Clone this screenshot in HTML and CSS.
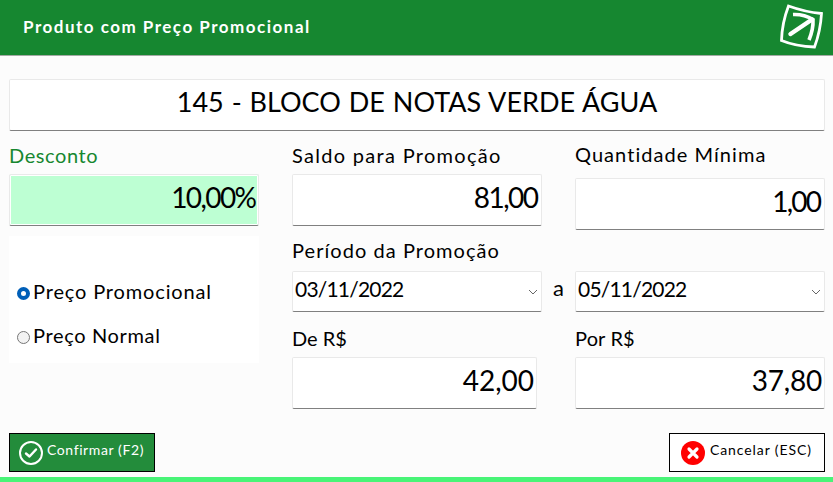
FILE: index.html
```html
<!DOCTYPE html>
<html lang="pt-BR">
<head>
<meta charset="utf-8">
<title>Produto com Preço Promocional</title>
<link rel="stylesheet" href="styles.css">
</head>
<body>
<header class="header">
  <h1 class="heading"><span class="t-heading">Produto com Preço Promocional</span></h1>
  <svg class="logo" width="46" height="48" viewBox="0 0 46 48" fill="none" stroke="#fff">
    <path d="M9.500 4Q26 10 42.500 11.500Q41.500 29 35.500 45Q17 44.500 2.500 38.500Q3 21 9.500 4Z" stroke-width="2.800"/>
    <path d="M14 12.500Q25 12 34 17.500Q34.500 27 30 38" stroke-width="3.600"/>
    <path d="M11.500 32L33 17.500" stroke-width="4.500" stroke-linecap="round"/>
  </svg>
</header>
<main class="content">
  <div class="field product"><span class="t-product">145 - BLOCO DE NOTAS VERDE ÁGUA</span></div>
  <div class="columns">
    <section class="column">
      <div class="label green"><span class="t-desconto">Desconto</span></div>
      <div class="field value discount"><span class="t-v1">10,00%</span></div>
      <div class="options">
        <div class="option"><i class="radio on"></i><span class="t-promo">Preço Promocional</span></div>
        <div class="option"><i class="radio"></i><span class="t-normal">Preço Normal</span></div>
      </div>
    </section>
    <section class="column">
      <div class="label"><span class="t-saldo">Saldo para Promoção</span></div>
      <div class="field value"><span class="t-v2">81,00</span></div>
      <div class="label period"><span class="t-periodo">Período da Promoção</span></div>
      <div class="field date"><span class="t-date">03/11/2022</span><svg class="chevron" width="10" height="6" viewBox="0 0 10 6"><path d="M1 1L5 5L9 1"/></svg></div>
      <div class="label price"><span class="t-de">De R$</span></div>
      <div class="field value from"><span class="t-v4">42,00</span></div>
    </section>
    <div class="until">a</div>
    <section class="column">
      <div class="label minimum"><span class="t-quant">Quantidade Mínima</span></div>
      <div class="field value"><span class="t-v3">1,00</span></div>
      <div class="field date second"><span class="t-date">05/11/2022</span><svg class="chevron" width="10" height="6" viewBox="0 0 10 6"><path d="M1 1L5 5L9 1"/></svg></div>
      <div class="label price"><span class="t-por">Por R$</span></div>
      <div class="field value"><span class="t-v5">37,80</span></div>
    </section>
  </div>
  <div class="actions">
    <button class="button confirm"><svg width="24" height="24" viewBox="0 0 24 24" fill="none" stroke="#fff" stroke-width="2"><circle cx="12" cy="12" r="11"/><path d="M7 12.500L10.500 15.500L17 8.500" stroke-width="2.400" stroke-linecap="round" stroke-linejoin="round"/></svg><span class="t-confirm">Confirmar (F2)</span></button>
    <button class="button cancel"><svg width="24" height="24" viewBox="0 0 24 24"><circle cx="12" cy="12" r="12" fill="#f00"/><path d="M8 8L16 16M16 8L8 16" stroke="#fff" stroke-width="3.200" stroke-linecap="round"/></svg><span class="t-cancel">Cancelar (ESC)</span></button>
  </div>
</main>
<footer class="strip"></footer>
</body>
</html>
```
FILE: styles.css
```css
* { box-sizing: border-box; }
body {
  margin: 0;
  width: 833px;
  height: 482px;
  display: flex;
  flex-direction: column;
  overflow: hidden;
  background: #fcfcfc;
  color: #000;
  font: 20px/24px Lato, "Open Sans", sans-serif;
}
span { white-space: nowrap; }
.header {
  flex: none;
  height: 56px;
  display: flex;
  justify-content: space-between;
  padding: 0 8px 0 23px;
  background: #168730;
  border-bottom: 1px solid #a3aaa4;
}
.heading { margin: 0; font-size: 17px; line-height: 54px; color: #fff; }
.logo { margin-top: 2px; }
.content { flex: 1; padding: 23px 8px 0 9px; }
.field {
  height: 52px;
  background: #fff;
  border: 1px solid #e9e9e9;
  border-bottom-color: #808080;
  border-radius: 2px;
}
.product { text-align: center; font-size: 27px; line-height: 44px; }
.columns { height: 302px; display: flex; }
.column { width: 250px; flex: none; }
.label { height: 43px; padding-top: 12px; }
.green { color: #168730; }
.minimum { height: 47px; padding-top: 11px; }
.value { text-align: right; font-size: 28px; line-height: 44px; padding-right: 2px; }
.discount { background: #bdffd3; box-shadow: inset 0 0 0 1px #fff; padding-right: 1px; }
.options { margin-top: 10px; height: 127px; padding: 34px 0 0 8px; background: #fff; }
.option { height: 44px; display: flex; align-items: center; gap: 3px; }
.option span { margin-top: -2px; }
.radio { width: 13px; height: 13px; flex: none; margin-top: 3px; border: 1px solid #777; border-radius: 50%; background: #f3f3f3; }
.radio.on { border: 4px solid #005fb8; background: #fff; }
.column + .column { margin-left: 33px; }
.label.period { height: 45px; }
.date { height: 41px; display: flex; justify-content: space-between; padding: 0 3px 0 2px; line-height: 34px; font-size: 21px; }
.date.second { margin-top: 41px; }
.chevron { margin-top: 17px; fill: none; stroke: #666; }
.label.price { height: 45px; padding-top: 14px; }
.from { width: 245px; }
.until { width: 33px; padding-top: 145px; text-align: center; font-size: 22px; }
.actions { display: flex; justify-content: space-between; }
.button { height: 39px; display: flex; align-items: center; border: 1px solid #000; border-radius: 0; font: 14px/20px Lato, sans-serif; padding: 0 0 0 9px; gap: 4px; }
.button span { margin-top: -5px; }
.confirm { width: 146px; background: #238c3b; color: #fff; }
.cancel { width: 156px; background: #fff; color: #000; padding-left: 11px; gap: 5px; }
.strip { height: 5px; flex: none; background: #48f477; }
.t-heading { letter-spacing: 1.5px; }
.t-product { word-spacing: 1px; }
.t-desconto { letter-spacing: .6px; }
.t-promo { letter-spacing: .85px; }
.t-normal { letter-spacing: .65px; }
.t-saldo { letter-spacing: 1.3px; }
.t-periodo, .t-quant { letter-spacing: 1.05px; }
.t-v1 { letter-spacing: -1.6px; margin-right: 1.6px; }
.t-v2 { letter-spacing: -1.5px; margin-right: 1.5px; }
.t-v3 { letter-spacing: -1.8px; margin-right: 1.8px; }
.t-v5 { letter-spacing: -.2px; }
.t-date { letter-spacing: -.8px; }
.t-por { letter-spacing: .15px; }
.t-confirm { letter-spacing: .6px; }
.t-cancel { letter-spacing: .9px; }
```
